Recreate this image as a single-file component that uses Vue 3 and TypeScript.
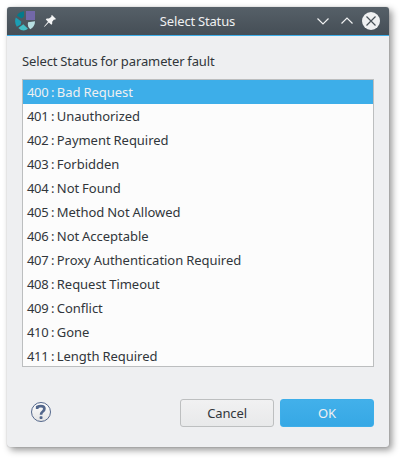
<script setup lang="ts">
import { ref } from 'vue'

interface Status {
  code: number
  label: string
}

const statuses: Status[] = [
  { code: 400, label: 'Bad Request' },
  { code: 401, label: 'Unauthorized' },
  { code: 402, label: 'Payment Required' },
  { code: 403, label: 'Forbidden' },
  { code: 404, label: 'Not Found' },
  { code: 405, label: 'Method Not Allowed' },
  { code: 406, label: 'Not Acceptable' },
  { code: 407, label: 'Proxy Authentication Required' },
  { code: 408, label: 'Request Timeout' },
  { code: 409, label: 'Conflict' },
  { code: 410, label: 'Gone' },
  { code: 411, label: 'Length Required' },
]

const selected = ref<number>(400)
</script>

<template>
  <div class="desktop">
    <section class="dialog">
      <header class="titlebar">
        <div class="left">
          <svg class="logo" width="20" height="20" viewBox="0 0 20 20">
            <path d="M1.800 4.500Q4.500 .8 9 .3V5.500L6.500 7.500Z" fill="#047a8b" />
            <path d="M.8 6.500L6.300 10.500L5.800 13.500L1.800 15.800Q-1 11.500 .8 6.500Z" fill="#1a9eb4" />
            <path d="M3.300 17L8.300 13.200L13 17.800Q8.300 21.800 3.300 17Z" fill="#44bec6" />
            <path d="M13 11.200L20 10.300Q20 15.500 15.300 18.300Q12 15.500 13 11.200Z" fill="#b7dfe2" />
            <path d="M11 0H20V9H11Z" fill="#7268a9" />
          </svg>
          <svg class="pin" width="12" height="12" viewBox="0 0 12 12">
            <path d="M8 0L12 4L10.800 4.800L10 4.500L8.200 6.700V9L7.300 9.800L4.800 7.500L.6 11.800L0 11.400L4 6.800L1.800 4.400L2.700 3.500H5L7.400 1.800L7.200.8Z" fill="#f4f5f5" />
          </svg>
        </div>
        <h1>Select Status</h1>
        <div class="controls">
          <svg width="18" height="18" viewBox="0 0 18 18"><path d="M3.500 6.500L9 12L14.500 6.500" /></svg>
          <svg width="18" height="18" viewBox="0 0 18 18"><path d="M3.500 11.500L9 6L14.500 11.500" /></svg>
          <svg class="close" width="18" height="18" viewBox="0 0 18 18">
            <circle cx="9" cy="9" r="9" />
            <path d="M4.500 4.500L13.500 13.500M13.500 4.500L4.500 13.500" />
          </svg>
        </div>
      </header>
      <main>
        <p class="caption">Select Status for parameter fault</p>
        <ul class="list">
          <li
            v-for="s in statuses"
            :key="s.code"
            :class="{ selected: s.code === selected }"
            @click="selected = s.code"
          ><span class="code">{{ s.code }} : </span>{{ s.label }}</li>
        </ul>
        <footer>
          <svg class="help" width="20" height="20" viewBox="0 0 20 20">
            <defs>
              <linearGradient id="helpFill" x1="0" y1="0" x2="0" y2="1">
                <stop offset="0" stop-color="#fff" />
                <stop offset="1" stop-color="#e3e3e3" />
              </linearGradient>
            </defs>
            <circle cx="10" cy="10" r="9.500" fill="url(#helpFill)" stroke="#53678c" />
            <path d="M6.200 7V5Q8 4 10 4.100Q13.400 4.200 13.400 6.800Q13.400 8.400 11.800 9.500Q10 10.700 10 12.800" fill="none" stroke="#53678c" stroke-width="2.700" />
            <rect x="8.600" y="14.200" width="2.900" height="2.800" rx=".8" fill="#53678c" />
          </svg>
          <div class="buttons">
            <button type="button">Cancel</button>
            <button type="button" class="primary">OK</button>
          </div>
        </footer>
      </main>
    </section>
  </div>
</template>

<style>
body {
  margin: 0;
  background: #fff;
}
</style>

<style scoped>
.desktop {
  box-sizing: border-box;
  width: 402px;
  height: 460px;
  padding: 7px;
  overflow: hidden;
  font-family: 'Noto Sans', sans-serif;
  font-size: 13px;
  color: #31363b;
}
.dialog {
  width: 382px;
  height: 440px;
  background: #eeeff1;
  border-radius: 3px;
  overflow: hidden;
  box-shadow: 0 0 1px rgba(0, 0, 0, 0.35), 3px 3px 7px rgba(0, 0, 0, 0.42);
}
.titlebar {
  box-sizing: border-box;
  height: 29px;
  display: grid;
  grid-template-columns: 74px 1fr 74px;
  align-items: center;
  padding: 0 9px 0 8px;
  background: linear-gradient(#566068, #454e56);
  border-bottom: 1px solid #3daee9;
}
.left {
  display: flex;
  align-items: center;
  gap: 9px;
}
h1 {
  margin: 0;
  font-size: 13px;
  font-weight: 400;
  line-height: 28px;
  letter-spacing: -0.14px;
  word-spacing: -0.4px;
  text-align: center;
  color: #eff0f1;
}
.controls {
  display: flex;
  justify-content: flex-end;
  gap: 6px;
}
.controls svg {
  flex: none;
  fill: none;
  stroke: #eff0f1;
  stroke-width: 1.2;
}
.close circle {
  fill: #eff0f1;
  stroke: none;
}
.close path {
  stroke: #475057;
}
main {
  padding: 13px 15px 0;
}
.caption {
  margin: 0;
  height: 30px;
  line-height: 24px;
  letter-spacing: -0.11px;
  word-spacing: -0.4px;
}
.list {
  box-sizing: border-box;
  height: 288px;
  margin: 0;
  padding: 0;
  list-style: none;
  overflow: hidden;
  background: #fcfcfc;
  border: 1px solid #bcbebf;
}
li {
  height: 24px;
  padding-left: 4px;
  line-height: 24px;
  letter-spacing: -0.03px;
  word-spacing: -0.4px;
  white-space: pre;
}
.code {
  letter-spacing: -0.33px;
}
li.selected {
  background: #3daee9;
  color: #eff0f1;
}
footer {
  display: flex;
  align-items: center;
  justify-content: space-between;
  margin-top: 32px;
  padding-left: 9px;
}
.help {
  margin-top: -2px;
}
.buttons {
  display: flex;
  gap: 6px;
}
button {
  box-sizing: border-box;
  width: 94px;
  height: 28px;
  padding: 0;
  border: 1px solid #bdbfc0;
  border-radius: 3px;
  background: linear-gradient(#f1f1f2, #e8e9ea);
  font: inherit;
  letter-spacing: -0.12px;
  color: #31363b;
}
button.primary {
  border-color: #3daee9;
  background: linear-gradient(#42b0ea, #36a8e5);
  color: #eff0f1;
}
</style>
